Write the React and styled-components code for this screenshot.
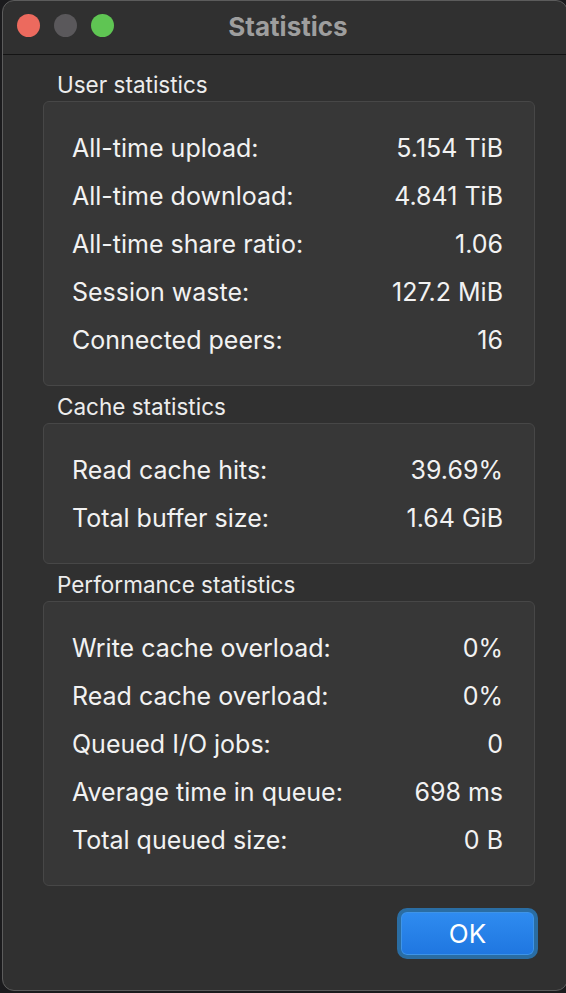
import styled, { createGlobalStyle } from "styled-components";

const Global = createGlobalStyle`
  html, body {
    margin: 0;
    padding: 0;
    background: #1b1b1d;
  }
  body {
    font-family: Inter, "Liberation Sans", sans-serif;
    -webkit-font-smoothing: antialiased;
  }
`;

const groups = [
    {
        title: "User statistics",
        rows: [
            ["All-time upload:", "5.154 TiB"],
            ["All-time download:", "4.841 TiB"],
            ["All-time share ratio:", "1.06"],
            ["Session waste:", "127.2 MiB"],
            ["Connected peers:", "16"],
        ],
    },
    {
        title: "Cache statistics",
        rows: [
            ["Read cache hits:", "39.69%"],
            ["Total buffer size:", "1.64 GiB"],
        ],
    },
    {
        title: "Performance statistics",
        rows: [
            ["Write cache overload:", "0%"],
            ["Read cache overload:", "0%"],
            ["Queued I/O jobs:", "0"],
            ["Average time in queue:", "698 ms"],
            ["Total queued size:", "0 B"],
        ],
    },
];

export default function App() {
    return (
        <>
            <Global />
            <Window>
                <TitleBar>
                    <Lights>
                        <Light $color="#ec6a5e" />
                        <Light $color="#5a585b" />
                        <Light $color="#5fc553" />
                    </Lights>
                    <Title>Statistics</Title>
                </TitleBar>
                <Content>
                    {groups.map((g) => (
                        <Group key={g.title}>
                            <GroupTitle>{g.title}</GroupTitle>
                            <Box>
                                {g.rows.map(([label, value]) => (
                                    <Row key={label}>
                                        <span>{label}</span>
                                        <span>{value}</span>
                                    </Row>
                                ))}
                            </Box>
                        </Group>
                    ))}
                    <Footer>
                        <OkButton>OK</OkButton>
                    </Footer>
                </Content>
            </Window>
        </>
    );
}

const Window = styled.div`
    margin-left: 2px;
    width: 566px;
    height: 991px;
    box-sizing: border-box;
    background: #303030;
    border: 1px solid #5c5c5c;
    border-radius: 12px;
    overflow: hidden;
    display: flex;
    flex-direction: column;
`;

const TitleBar = styled.div`
    position: relative;
    height: 53px;
    flex-shrink: 0;
    border-bottom: 1.5px solid #141414;
    display: flex;
    align-items: center;
    justify-content: center;
`;

const Lights = styled.div`
    position: absolute;
    left: 14px;
    top: 13px;
    display: flex;
    gap: 14px;
`;

const Light = styled.span`
    width: 23px;
    height: 23px;
    border-radius: 50%;
    background: ${(p) => p.$color};
`;

const Title = styled.div`
    font-size: 26px;
    font-weight: 700;
    color: #9e9e9e;
    margin-left: 6px;
    margin-top: -2px;
`;

const Content = styled.div`
    padding: 18px 32px 0 40px;
    display: flex;
    flex-direction: column;
`;

const Group = styled.section`
    display: flex;
    flex-direction: column;
    margin-bottom: 9px;
`;

const GroupTitle = styled.div`
    font-size: 22.5px;
    line-height: 24px;
    color: #ececec;
    padding-left: 14px;
    margin-bottom: 4px;
`;

const Box = styled.div`
    background: #373737;
    border: 1.5px solid #474747;
    border-radius: 6px;
    padding: 22px 31px 21px 28px;
    display: flex;
    flex-direction: column;
`;

const Row = styled.div`
    height: 48px;
    display: flex;
    align-items: center;
    justify-content: space-between;
    font-size: 25px;
    color: #f2f2f2;
`;

const Footer = styled.div`
    display: flex;
    justify-content: flex-end;
    padding-top: 13px;
`;

const OkButton = styled.button`
    width: 141px;
    height: 51px;
    margin-right: -3px;
    border-radius: 10px;
    border: 4px solid #2a6da3;
    background: linear-gradient(#2f8cf0, #1f76e0);
    color: #ffffff;
    font-family: Inter, "Liberation Sans", sans-serif;
    font-size: 26px;
    padding: 0;
    box-shadow: inset 0 0 0 1px #3e94e8;
`;
